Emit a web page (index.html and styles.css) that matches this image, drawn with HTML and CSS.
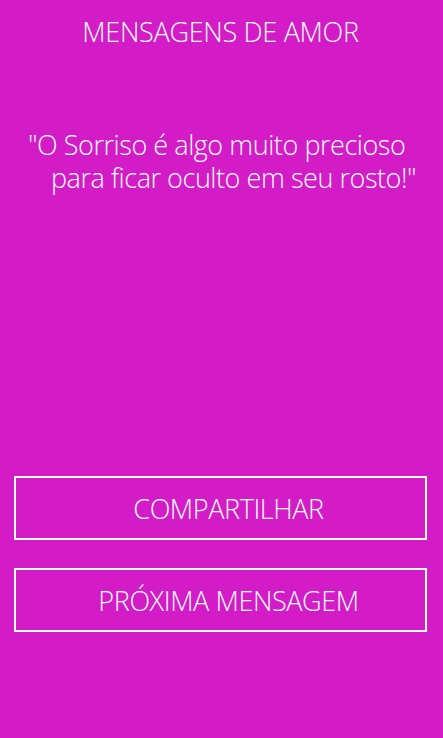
FILE: index.html
```html
<!DOCTYPE html>
<html lang="pt-BR">
<head>
<meta charset="UTF-8">
<meta name="viewport" content="width=device-width, initial-scale=1.0">
<title>Mensagens de Amor</title>
<link rel="stylesheet" href="styles.css">
</head>
<body>

  <!-- Tela principal -->
<div class="app-container">
  <h1 class="app-title">MENSAGENS DE AMOR</h1>

  <p class="mensagem" id="mensagem">"O Sorriso é algo muito precioso<br>para ficar oculto em seu rosto!"</p>

  <div class="acoes">
    <button class="btn-acao" id="compartilhar-btn">COMPARTILHAR</button>
    <button class="btn-acao" id="proxima-btn">PRÓXIMA MENSAGEM</button>
  </div>
</div>

</body>
</html>
```

FILE: styles.css
```css
body {
  font-family: "Open Sans", "Noto Sans", sans-serif;
  font-weight: 300;
  margin: 0;
  padding: 0;
  height: 100vh;
  background-color: #d31bc7;
  color: #fff;
}

.app-container {
  display: flex;
  flex-direction: column;
  height: 100%;
  box-sizing: border-box;
  padding: 13px 16px 0 14px;
}

.app-title {
  margin: 0;
  font-size: 27px;
  font-weight: 300;
  letter-spacing: -0.3px;
  line-height: 38px;
  text-align: center;
}

.mensagem {
  margin: 77px 0 0 0;
  padding-left: 37px;
  text-indent: -23px;
  white-space: nowrap;
  font-size: 27px;
  letter-spacing: -0.45px;
  line-height: 33px;
}

.acoes {
  display: flex;
  flex-direction: column;
  gap: 28px;
  margin-top: 282px;
}

.btn-acao {
  height: 64px;
  padding: 0 0 0 16px;
  background-color: transparent;
  color: #fff;
  border: 2px solid #fff;
  font-family: inherit;
  font-size: 27px;
  font-weight: 300;
  letter-spacing: -0.4px;
  cursor: pointer;
}

.btn-acao:active {
  background-color: #fff;
  color: #d31bc7;
}
```
